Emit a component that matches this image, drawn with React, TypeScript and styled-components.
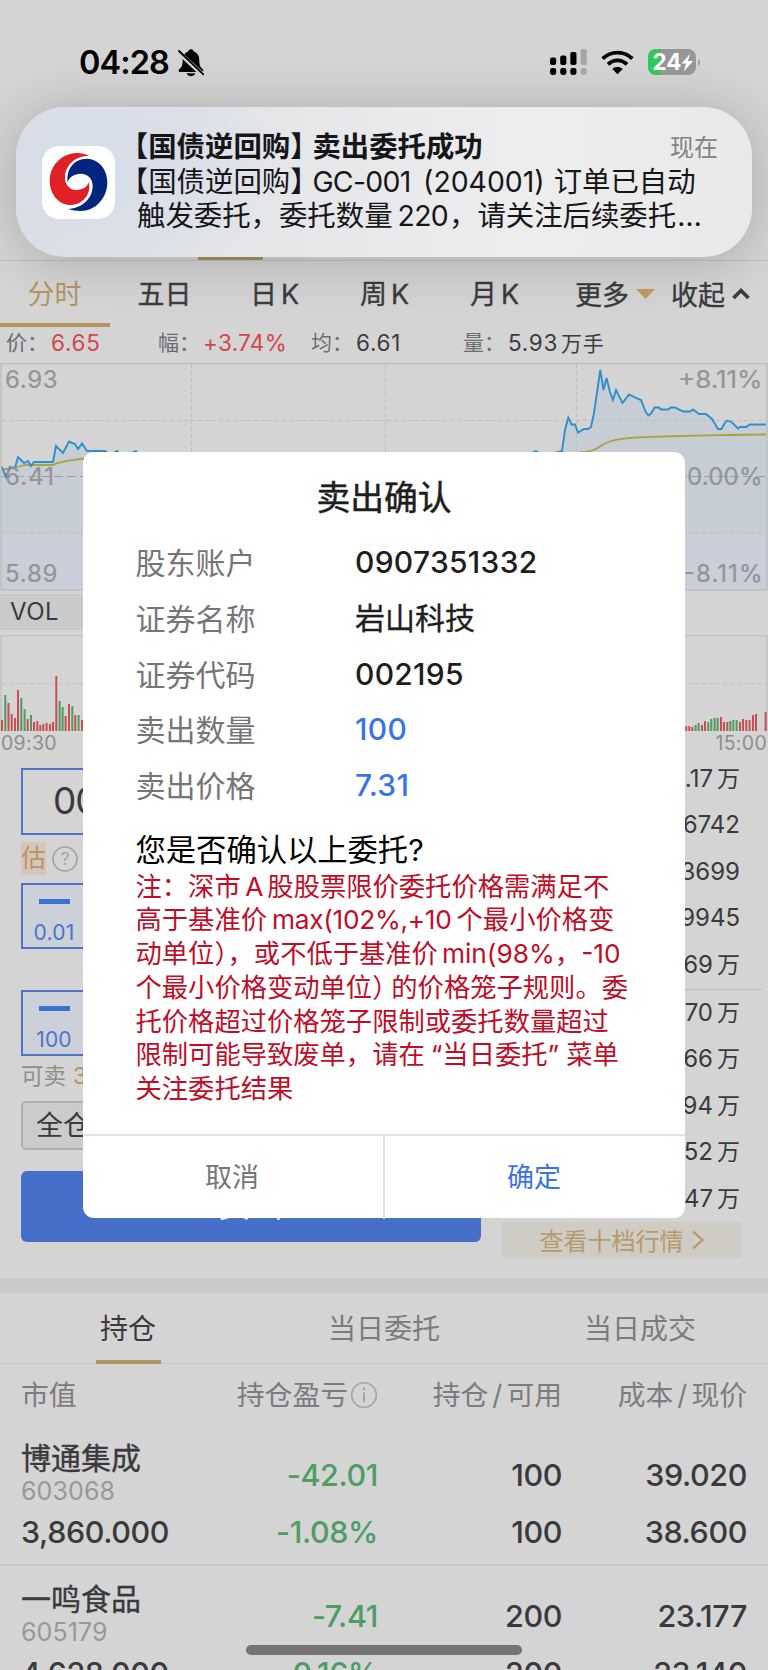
import React from 'react';
import styled, { createGlobalStyle } from 'styled-components';

const GlobalStyle = createGlobalStyle`
  *, *::before, *::after { box-sizing: border-box; }
  html, body { margin: 0; padding: 0; background: #d4d4d4; }
  body {
    font-family: Inter, "Noto Sans CJK SC", sans-serif;
    color: #3a3a3c;
    -webkit-font-smoothing: antialiased;
  }
`;

const Screen = styled.div`
  position: relative;
  width: 768px;
  height: 1670px;
  overflow: hidden;
  display: flex;
  flex-direction: column;
  background: #d4d4d4;
  white-space: nowrap;
`;

/* Latin run inside Chinese text, with a little air on the sides. */
const Latin = styled.span<{ $l?: number; $r?: number; $ls?: number }>`
  margin-left: ${(p) => p.$l ?? 0}px;
  margin-right: ${(p) => p.$r ?? 0}px;
  letter-spacing: ${(p) => p.$ls ?? 0}px;
`;

/* ---------- status bar ---------- */
const StatusBar = styled.header`
  position: relative;
  z-index: 3;
  flex: none;
  height: 107px;
  padding: 18px 67px 0 79px;
  display: flex;
  align-items: center;
  justify-content: space-between;
  color: #000;
`;
const Clock = styled.div`
  display: flex;
  align-items: center;
  gap: 9px;
  font-size: 32.5px;
  font-weight: 600;
  line-height: 40px;
  letter-spacing: -0.9px;
`;
const StatusIcons = styled.div`
  display: flex;
  align-items: center;
  gap: 14px;
`;

const BellOff = () => (
  <svg width="26" height="28" viewBox="0 0 78 84">
    <path
      d="M39 1c-5 0-8 3-9 7C17 12 14 23 14 36c0 14-4 19-10 25-4 4-3 8 3 8h64c6 0 7-4 3-8-6-6-10-11-10-25 0-13-3-24-16-28-1-4-4-7-9-7z"
    />
    <path d="M26 73h26c-2 5-7 9-13 9s-11-4-13-9z" />
    <path d="M0 8L76 79" stroke="#d0d0d0" strokeWidth="14" />
    <path d="M3 6L76 76" stroke="#000" strokeWidth="5.5" strokeLinecap="round" />
  </svg>
);

const Signal = () => (
  <svg width="37" height="27" viewBox="0 0 37 27">
    <g fill="#000">
      <rect x="0" y="8.5" width="6.2" height="7.5" rx="2" />
      <rect x="10.2" y="6.5" width="6.2" height="9.5" rx="2" />
      <rect x="20.3" y="3" width="6.2" height="13" rx="2" />
      <rect x="0" y="19" width="6.2" height="7" rx="2.4" />
      <rect x="10.2" y="19" width="6.2" height="7" rx="2.4" />
      <rect x="20.3" y="19" width="6.2" height="7" rx="2.4" />
    </g>
    <g fill="#a6a6a6">
      <rect x="30.6" y="0" width="6.2" height="16" rx="2" />
      <rect x="30.6" y="19" width="6.2" height="7" rx="2.4" />
    </g>
  </svg>
);

const Wifi = () => (
  <svg width="33" height="25" viewBox="0 0 99 75">
    <g fill="none" stroke="#000" strokeWidth="11.5">
      <path d="M5 26C30 2 69 2 94 26" />
      <path d="M21 43C38 27 61 27 78 43" />
    </g>
    <path d="M34 57c9-8 22-8 31 0L49.500 73z" />
  </svg>
);

const Battery = () => (
  <svg width="53" height="27" viewBox="0 0 53 27">
    <defs>
      <clipPath id="cell">
        <rect x="0" y="0" width="48" height="26" rx="8" />
      </clipPath>
    </defs>
    <g clipPath="url(#cell)">
      <rect width="48" height="26" fill="#969696" />
      <rect width="12.500" height="26" fill="#34c759" />
    </g>
    <path d="M50 9.500c2.700 1.400 2.700 6 0 7.500z" fill="#a0a0a0" />
    <text x="4.500" y="21.300" fontSize="22.500" fontWeight="700" fill="#fff" textLength="29" lengthAdjust="spacingAndGlyphs">24</text>
    <path d="M42 5L33.500 14.500h4.600L35.800 22.500l9.200-10.500h-5z" fill="#fff" />
  </svg>
);

/* ---------- notification ---------- */
const Banner = styled.section`
  position: absolute;
  z-index: 2;
  left: 16px;
  top: 107px;
  width: 736px;
  height: 150px;
  border-radius: 49px;
  padding: 23px 34px 23px 26px;
  display: flex;
  background:
    radial-gradient(ellipse 190px 120px at 90px 50px, #d7dee9 20%, rgba(215, 222, 233, 0) 100%),
    linear-gradient(90deg, #dadde3 0%, #e5e6e8 35%, #ededee 70%, #e9e9ea 100%);
  box-shadow: 0 4px 54px rgba(0, 0, 0, 0.2);
`;
const AppIcon = styled.div`
  flex: none;
  width: 73px;
  height: 73px;
  margin-top: 16px;
  border-radius: 17px;
  background: #fff;
  overflow: hidden;
`;
const BannerBody = styled.div`
  flex: 1;
  min-width: 0;
  margin-left: 22px;
  color: #161618;
  font-size: 28.400px;
`;
const BannerLine = styled.div<{ $bold?: boolean; $hang?: boolean }>`
  height: 34.500px;
  margin-left: ${(p) => (p.$hang ? -3 : 0)}px;
  line-height: 34.500px;
  font-weight: ${(p) => (p.$bold ? 700 : 400)};
  display: flex;
  justify-content: space-between;
`;
const Half = styled.span`
  font-feature-settings: 'halt';
`;
const Time = styled.span`
  font-size: 24px;
  font-weight: 400;
  color: #828285;
  line-height: 36px;
`;

const Logo = () => (
  <svg width="73" height="73" viewBox="66 348 219 219">
    <path
      fill="#e01f26"
      d="M207 377C190 369 170 367 150 372C113 382 89 415 89 452C89 492 117 525 152 525C184 525 207 500 208 471C208 465 207 461 205 457C204 470 187 481 168 480C148 479 135 463 135 443C135 412 157 379 207 377Z"
    />
    <path
      fill="#04257d"
      d="M143 457C138 420 160 386 200 386C237 387 262 418 262 456C262 505 226 543 182 543C168 543 155 541 144 537C192 535 218 500 218 468C218 446 204 431 182 431C162 431 147 442 143 457Z"
    />
  </svg>
);

/* ---------- market header ---------- */
const MarketNav = styled.div`
  flex: none;
  height: 154px;
  border-bottom: 1px solid #c0c0c0;
  display: flex;
  align-items: flex-end;
  padding-left: 198px;
`;
const NavMark = styled.div`
  width: 65px;
  height: 4px;
  background: #a98f5a;
`;
const PeriodTabs = styled.nav`
  flex: none;
  height: 66px;
  display: flex;
  font-size: 27px;
`;
const Period = styled.div<{ $on?: boolean }>`
  width: 110px;
  padding-right: 1px;
  text-align: center;
  line-height: 68px;
  height: 66px;
  color: ${(p) => (p.$on ? '#b3965f' : '#3c3c3e')};
  -webkit-text-stroke: ${(p) => (p.$on ? '0' : '0.35px #3c3c3e')};
  border-bottom: ${(p) => (p.$on ? '4px solid #b3965f' : '0')};
`;
const PeriodAction = styled.div<{ $ml: number }>`
  margin-left: ${(p) => p.$ml}px;
  display: flex;
  align-items: center;
  gap: 7px;
  height: 65px;
  -webkit-text-stroke: 0.35px #3c3c3e;
`;

const QuoteRow = styled.div`
  flex: none;
  height: 36px;
  padding-left: 6px;
  display: flex;
  line-height: 31px;
  font-size: 21px;
  color: #6e6e70;
`;
const Quote = styled.div<{ $w: number }>`
  width: ${(p) => p.$w}px;
  display: flex;
`;
const QuoteName = styled.span`
  width: 45px;
`;
const QuoteValue = styled.span<{ $red?: boolean; $ls?: number }>`
  color: ${(p) => (p.$red ? '#d3474b' : '#3c3c3e')};
  font-size: 22.500px;
  letter-spacing: ${(p) => p.$ls ?? 0.7}px;
`;
const Unit = styled.span`
  margin-left: 3px;
  font-size: 21px;
`;

const ChartArea = styled.svg`
  display: block;
  flex: none;
`;

const VolHead = styled.div`
  flex: none;
  width: 200px;
  height: 36px;
  margin: 3px 0 5px;
  padding-left: 10px;
  background: #cacaca;
  font-size: 24px;
  letter-spacing: 0.5px;
  line-height: 36px;
`;
const TimeAxis = styled.div`
  flex: none;
  display: flex;
  justify-content: space-between;
  height: 37px;
  padding: 0 1px;
  font-size: 19.500px;
  letter-spacing: 0.3px;
  line-height: 24px;
  color: #8e8e90;
`;

/* ---------- order form ---------- */
const TradePanel = styled.section`
  flex: none;
  height: 510px;
  display: flex;
  justify-content: space-between;
`;
const OrderForm = styled.div`
  width: 460px;
  margin-left: 21px;
  display: flex;
  flex-direction: column;
`;
const CodeBox = styled.div`
  height: 67px;
  border: 2px solid #4d73cd;
  padding-left: 30px;
  font-size: 37px;
  line-height: 62px;
  letter-spacing: -1px;
`;
const Estimate = styled.div`
  height: 48px;
  padding-top: 7px;
  display: flex;
  gap: 6px;
`;
const EstimateTag = styled.span`
  width: 25px;
  height: 33px;
  background: #d4c6ba;
  color: #bd9267;
  font-size: 25px;
  line-height: 32px;
`;
const Stepper = styled.div`
  height: 66px;
  border: 2px solid #4d73cd;
  background: #cbd0d9;
  display: flex;
  margin-bottom: 41px;
`;
const StepButton = styled.div`
  width: 62px;
  display: flex;
  flex-direction: column;
  align-items: center;
  color: #4d73cd;
  font-size: 21px;
  line-height: 26px;
  letter-spacing: 0.2px;
`;
const Minus = styled.i`
  width: 31px;
  height: 5px;
  margin: 14px 0 16px;
  background: #3a72cd;
`;
const Sellable = styled.div`
  height: 45px;
  margin-top: -41px;
  font-size: 22.500px;
  line-height: 39px;
  color: #8e8e90;
`;
const Gold = styled.span`
  margin-left: 7px;
  color: #b3965f;
`;
const PositionButton = styled.div`
  width: 106px;
  height: 49px;
  padding-left: 13px;
  border: 2px solid #b0b0b0;
  border-radius: 5px;
  background: #cbcbcb;
  font-size: 27px;
  line-height: 45px;
`;
const SellButton = styled.div`
  height: 71px;
  margin-top: 21px;
  border-radius: 6px;
  background: #466fc9;
  color: #e4e9f4;
  font-size: 32px;
  line-height: 69px;
  letter-spacing: 1px;
  text-align: center;
`;

const Book = styled.div`
  width: 266px;
  margin: -12px 6px 0 0;
  display: flex;
  flex-direction: column;
`;
const BookHalf = styled.div<{ $lower?: boolean }>`
  padding: ${(p) => (p.$lower ? '0' : '0 0 1px')};
  border-bottom: ${(p) => (p.$lower ? '0' : '1px solid #bcbcbc')};
`;
const BookRow = styled.div`
  height: 46.400px;
  line-height: 46.400px;
  padding-right: 22px;
  text-align: right;
  font-size: 24px;
`;
const Wan = styled.span`
  margin-left: 4px;
  font-size: 23px;
`;
const DepthLink = styled.div`
  width: 239px;
  height: 36px;
  margin: 0 0 0 6px;
  display: flex;
  align-items: center;
  justify-content: center;
  gap: 8px;
  background: #cfcbc5;
  color: #b59a6c;
  font-size: 24px;
`;

/* ---------- positions ---------- */
const Band = styled.div`
  flex: none;
  height: 15px;
  background: #cacaca;
`;
const BottomTabs = styled.nav`
  flex: none;
  height: 71px;
  display: grid;
  grid-template-columns: repeat(3, 256px);
  border-bottom: 1px solid #c8c8c8;
`;
const BottomTab = styled.div<{ $on?: boolean }>`
  padding-top: 5px;
  display: flex;
  flex-direction: column;
  align-items: center;
  font-size: 28px;
  line-height: 62px;
  color: ${(p) => (p.$on ? '#3a3a3c' : '#7c7c7e')};
  &::after {
    content: '';
    width: 65px;
    height: 4px;
    background: ${(p) => (p.$on ? '#b3965f' : 'transparent')};
  }
`;
const TableHead = styled.div`
  flex: none;
  height: 61px;
  display: grid;
  grid-template-columns: 180px 177px 184px 185px;
  padding-left: 21px;
  font-size: 27.800px;
  line-height: 60px;
  color: #7c7c7e;
`;
const HeadCell = styled.div<{ $right?: boolean; $gap?: number }>`
  display: flex;
  align-items: center;
  gap: ${(p) => p.$gap ?? 4}px;
  justify-content: ${(p) => (p.$right ? 'flex-end' : 'flex-start')};
`;
const Holding = styled.div`
  flex: none;
  height: 141px;
  padding: 14px 0 0 21px;
  display: grid;
  grid-template-columns: 180px 177px 184px 185px;
  grid-template-rows: 71px 44px;
  border-bottom: 2px solid #c8c8c8;
  font-size: 30.500px;
`;
const Name = styled.div`
  font-size: 30px;
  -webkit-text-stroke: 0.35px #3a3a3c;
  line-height: 38px;
`;
const Code = styled.div`
  font-size: 25px;
  line-height: 28px;
  letter-spacing: 0.1px;
  color: #98989a;
`;
const Amount = styled.div<{ $green?: boolean; $left?: boolean }>`
  line-height: 40px;
  align-self: center;
  font-weight: 500;
  letter-spacing: -0.4px;
  text-align: ${(p) => (p.$left ? 'left' : 'right')};
  color: ${(p) => (p.$green ? '#4f9d63' : '#3a3a3c')};
`;
const HomeBar = styled.div`
  position: absolute;
  z-index: 2;
  left: 246px;
  top: 1645px;
  width: 276px;
  height: 10px;
  border-radius: 5px;
  background: #747474;
`;

/* ---------- dialog ---------- */
const Dialog = styled.section`
  position: absolute;
  z-index: 1;
  left: 83px;
  top: 452px;
  width: 602px;
  height: 766px;
  border-radius: 11px;
  background: #fff;
  display: flex;
  flex-direction: column;
`;
const DialogTitle = styled.h1`
  margin: 0;
  padding-top: 24px;
  height: 82px;
  text-align: center;
  font-size: 33.800px;
  font-weight: 400;
  -webkit-text-stroke: 0.5px #1e1e20;
  line-height: 44px;
  color: #1e1e20;
`;
const Field = styled.div`
  height: 55.750px;
  padding-left: 52.500px;
  display: flex;
  font-size: 30px;
  line-height: 56px;
`;
const FieldName = styled.div`
  width: 219.500px;
  padding-top: 1px;
  color: #757577;
`;
const FieldValue = styled.div<{ $blue?: boolean; $cjk?: boolean }>`
  font-weight: ${(p) => (p.$cjk ? 400 : 500)};
  -webkit-text-stroke: ${(p) => (p.$cjk ? '0.35px #1e1e20' : '0')};
  letter-spacing: ${(p) => (p.$cjk ? 0 : 0.3)}px;
  color: ${(p) => (p.$blue ? '#3a73e8' : '#1e1e20')};
`;
const Question = styled.p`
  margin: 17px 0 0 52.500px;
  font-size: 30.300px;
  line-height: 40px;
  color: #000;
`;
const Notice = styled.div`
  margin: 0 0 0 52.500px;
  font-size: 26.300px;
  line-height: 33.700px;
  color: #c00e28;
`;
const DialogActions = styled.div`
  margin-top: auto;
  height: 84px;
  display: grid;
  grid-template-columns: 300px 302px;
  border-top: 2px solid #e3e3e3;
`;
const Action = styled.button<{ $primary?: boolean }>`
  border: 0;
  border-left: ${(p) => (p.$primary ? '2px solid #e3e3e3' : '0')};
  background: none;
  padding: 1px 2px 0 0;
  font: inherit;
  font-size: 27px;
  line-height: 82px;
  color: ${(p) => (p.$primary ? '#3a73e8' : '#757577')};
`;

/* ---------- data ---------- */
const priceLine =
  '2,467 6,477 10,467 15,468 18,457 24,463 28,461 31,466 34,462 53,462 56,446 63,453 69,441.500 75,444 78,449 82,443.500 87,451 105,451 110,455 117,451 122,456 136,451 142,458 300,468 520,458 536,451 544,456 562,451 565,430 568.300,417.500 571.500,424.500 575,424.500 578,432.500 584,429 588,429 591,427 594,413 600.300,370 603.500,390 606.500,378 610,392 613,400 616,390 622.500,403 629,394.500 636,398 641,400 646,412.500 648.500,415.500 651,413.500 654.500,407.500 659,407.500 661,409.500 668,409.500 671,407.500 675,407.500 683,411.500 690,411.500 693,409.500 699,414 706,414 712,419 718,429 721.500,429 725,422.500 727.500,420.500 732,422.500 738,428.500 740,427 746,427 750,424.500 766,424.500';
const averageLine =
  'M2 470C10 468 16 468 25 465H53C60 461 68 461 83 458.500C90 500 500 500 580 452.500C600 451 598 445 610 441.500C624 437 645 437 680 436C715 435.500 740 434.500 766 434.500';

type Bar = [number, number, ('g' | 'r')?];
const volume: Bar[] = [
  [2, 11], [5.300, 36, 'g'], [8.500, 28], [11.700, 17], [15, 13], [18, 41], [21.300, 33, 'g'], [24.600, 22, 'g'],
  [27.700, 12], [31, 16, 'g'], [34, 9], [37.300, 10], [40.300, 6], [43.300, 7], [46.600, 8], [50, 7], [53, 9],
  [56.300, 55], [59.600, 30, 'g'], [62.600, 24, 'g'], [65.600, 15], [69, 27], [72.300, 25, 'g'], [75.300, 16],
  [78.600, 16, 'g'], [82, 11],
  [686.300, 5], [689.300, 5], [692.300, 4], [695.600, 6, 'g'], [698.600, 8, 'g'], [702, 6], [705, 10],
  [708.300, 9, 'g'], [711.300, 12, 'g'], [714.600, 13, 'g'], [717.600, 13, 'g'], [721, 14], [724, 9], [727.300, 9],
  [730.300, 10, 'g'], [733.300, 11, 'g'], [736.600, 11, 'g'], [740, 9], [743, 12], [746.300, 11], [749.600, 11],
  [753, 16], [756, 17], [765.600, 19],
];

const noticeLines: React.ReactNode[] = [
  <>注：深市<Latin $l={4.5} $r={4}>A</Latin>股股票限价委托价格需满足不</>,
  <>高于基准价<Latin $l={5} $r={5} $ls={-0.3}>max(102%,+10</Latin>个最小价格变</>,
  <>动单位<Half>）</Half>，或不低于基准价<Latin $l={4}>min(98%</Latin>，<Latin>-10</Latin></>,
  <>个最小价格变动单位<Half>）</Half><Latin $l={6}>的价格笼子规则。委</Latin></>,
  <>托价格超过价格笼子限制或委托数量超过</>,
  <>限制可能导致废单，请在<Latin $l={6}>“</Latin>当日委托<Latin $r={7}>”</Latin>菜单</>,
  <>关注委托结果</>,
];

const upper = ['1.17', '16742', '13699', '19945', '2.69'];
const lower = ['3.70', '2.66', '1.94', '4.52', '3.47'];

const holdings = [
  { name: '博通集成', code: '603068', profit: '-42.01', qty: '100', cost: '39.020', value: '3,860.000', pct: '-1.08%', avail: '100', price: '38.600' },
  { name: '一鸣食品', code: '605179', profit: '-7.41', qty: '200', cost: '23.177', value: '4,628.000', pct: '-0.16%', avail: '200', price: '23.140' },
];

const MarketChart = () => (
  <ChartArea width="768" height="228" viewBox="0 363 768 228">
    <polygon points={`${priceLine} 766,590 2,590`} fill="#b5c4d4" fillOpacity="0.4" />
    <rect x="1" y="533" width="766" height="57" fill="#d0d2e0" fillOpacity="0.35" />
    <rect x="1" y="363.500" width="766" height="226.500" fill="none" stroke="#bcbebc" strokeWidth="1.500" />
    <g stroke="#b9bfb9" strokeWidth="1" strokeDasharray="4 3" fill="none">
      <path d="M191.500 364V590M385.500 364V590M576.500 364V590M2 420.500H766M2 533H766" />
    </g>
    <path d="M2 476.500H766" stroke="#9b9fa3" strokeWidth="1" strokeDasharray="9 4" />
    <path d={averageLine} fill="none" stroke="#ada13c" strokeWidth="1.800" />
    <polyline points={priceLine} fill="none" stroke="#2f8fcb" strokeWidth="1.900" />
    <g fontSize="24" fill="#929496" stroke="#929496" strokeWidth="0.2">
      <text x="5" y="387.500" textLength="52.500">6.93</text>
      <text x="5" y="484.500" textLength="49">6.41</text>
      <text x="5" y="581.500" textLength="52.500">5.89</text>
      <text x="678" y="387.500" textLength="84.500" lengthAdjust="spacingAndGlyphs">+8.11%</text>
      <text x="687" y="484.500" textLength="75.500">0.00%</text>
      <text x="684" y="581.500" textLength="78.500">-8.11%</text>
    </g>
  </ChartArea>
);

const VolumeChart = () => (
  <ChartArea width="768" height="96" viewBox="0 635 768 96">
    <path d="M1 731V635.500H767V731" fill="none" stroke="#c0c2c0" strokeWidth="1.500" />
    <path d="M2 683.500H766" stroke="#bec0be" strokeDasharray="4 3" />
    {volume.map(([x, h, c]) => (
      <rect key={x} x={x - 1} y={731 - h} width="2" height={h} fill={c === 'g' ? '#4f9a60' : '#c94f54'} />
    ))}
  </ChartArea>
);

export default function App() {
  return (
    <Screen>
      <GlobalStyle />
      <StatusBar>
        <Clock>
          04:28
          <BellOff />
        </Clock>
        <StatusIcons>
          <Signal />
          <Wifi />
          <Battery />
        </StatusIcons>
      </StatusBar>

      <Banner>
        <AppIcon>
          <Logo />
        </AppIcon>
        <BannerBody>
          <BannerLine $bold $hang>
            <span><Half>【</Half>国债逆回购<Half>】</Half><Latin $l={8}>卖出委托成功</Latin></span>
            <Time>现在</Time>
          </BannerLine>
          <BannerLine $hang>
            <span>
              <Half>【</Half>国债逆回购<Half>】</Half>
              <Latin $l={8} $ls={-0.7}>GC-001</Latin><Latin $l={12.5} $r={9}>(204001)</Latin>订单已自动
            </span>
          </BannerLine>
          <BannerLine>
            <span>触发委托，委托数量<Latin $l={5} $r={1} $ls={-0.7}>220</Latin>，请关注后续委托<Latin $l={1} $ls={1}>…</Latin></span>
          </BannerLine>
        </BannerBody>
      </Banner>

      <MarketNav>
        <NavMark />
      </MarketNav>
      <PeriodTabs>
        <Period $on>分时</Period>
        <Period>五日</Period>
        <Period>日<Latin $l={4}>K</Latin></Period>
        <Period>周<Latin $l={4}>K</Latin></Period>
        <Period>月<Latin $l={4}>K</Latin></Period>
        <PeriodAction $ml={25}>
          更多
          <svg width="19" height="10" viewBox="0 0 19 10"><path d="M0 0H19L9.500 10z" fill="#c39a62" /></svg>
        </PeriodAction>
        <PeriodAction $ml={16}>
          收起
          <svg width="18" height="13" viewBox="0 0 18 13"><path d="M1.500 11L9 3.500L16.500 11" fill="none" stroke="#3c3c3e" strokeWidth="3.600" /></svg>
        </PeriodAction>
      </PeriodTabs>
      <QuoteRow>
        <Quote $w={152}><QuoteName>价：</QuoteName><QuoteValue $red>6.65</QuoteValue></Quote>
        <Quote $w={153}><QuoteName>幅：</QuoteName><QuoteValue $red $ls={0.3}>+3.74%</QuoteValue></Quote>
        <Quote $w={152}><QuoteName>均：</QuoteName><QuoteValue>6.61</QuoteValue></Quote>
        <Quote $w={200}><QuoteName>量：</QuoteName><QuoteValue>5.93<Unit>万手</Unit></QuoteValue></Quote>
      </QuoteRow>
      <MarketChart />
      <VolHead>VOL</VolHead>
      <VolumeChart />
      <TimeAxis>
        <span>09:30</span>
        <span>15:00</span>
      </TimeAxis>

      <TradePanel>
        <OrderForm>
          <CodeBox>002195</CodeBox>
          <Estimate>
            <EstimateTag>估</EstimateTag>
            <svg width="26" height="34" viewBox="0 0 26 34">
              <circle cx="13" cy="17" r="12" fill="none" stroke="#a2a2a2" strokeWidth="1.600" />
              <text x="13" y="23" fontSize="17" fill="#a2a2a2" textAnchor="middle">?</text>
            </svg>
          </Estimate>
          <Stepper><StepButton><Minus />0.01</StepButton></Stepper>
          <Stepper><StepButton><Minus />100</StepButton></Stepper>
          <Sellable>可卖<Gold>300</Gold></Sellable>
          <PositionButton>全仓</PositionButton>
          <SellButton>卖出</SellButton>
        </OrderForm>
        <Book>
          <BookHalf>
            {upper.map((v) => (
              <BookRow key={v}>{v}{v.includes('.') && <Wan>万</Wan>}</BookRow>
            ))}
          </BookHalf>
          <BookHalf $lower>
            {lower.map((v) => (
              <BookRow key={v}>{v}<Wan>万</Wan></BookRow>
            ))}
          </BookHalf>
          <DepthLink>
            查看十档行情
            <svg width="12" height="20" viewBox="0 0 12 20"><path d="M1 1.500L10.500 10L1 18.500" fill="none" stroke="#b59a6c" strokeWidth="2.200" /></svg>
          </DepthLink>
        </Book>
      </TradePanel>

      <Band />
      <BottomTabs>
        <BottomTab $on>持仓</BottomTab>
        <BottomTab>当日委托</BottomTab>
        <BottomTab>当日成交</BottomTab>
      </BottomTabs>
      <TableHead>
        <HeadCell>市值</HeadCell>
        <HeadCell $right $gap={2}>
          持仓盈亏
          <svg width="28" height="28" viewBox="0 0 28 28">
            <circle cx="14" cy="14" r="12.300" fill="none" stroke="#a4a4a4" strokeWidth="1.600" />
            <path d="M14 11.500V21M14 6.500V9" stroke="#a4a4a4" strokeWidth="2" />
          </svg>
        </HeadCell>
        <HeadCell $right>持仓<span>/</span>可用</HeadCell>
        <HeadCell $right>成本<span>/</span>现价</HeadCell>
      </TableHead>
      {holdings.map((h) => (
        <Holding key={h.code}>
          <div>
            <Name>{h.name}</Name>
            <Code>{h.code}</Code>
          </div>
          <Amount $green>{h.profit}</Amount>
          <Amount>{h.qty}</Amount>
          <Amount>{h.cost}</Amount>
          <Amount $left>{h.value}</Amount>
          <Amount $green>{h.pct}</Amount>
          <Amount>{h.avail}</Amount>
          <Amount>{h.price}</Amount>
        </Holding>
      ))}
      <HomeBar />

      <Dialog>
        <DialogTitle>卖出确认</DialogTitle>
        <Field><FieldName>股东账户</FieldName><FieldValue>0907351332</FieldValue></Field>
        <Field><FieldName>证券名称</FieldName><FieldValue $cjk>岩山科技</FieldValue></Field>
        <Field><FieldName>证券代码</FieldName><FieldValue>002195</FieldValue></Field>
        <Field><FieldName>卖出数量</FieldName><FieldValue $blue>100</FieldValue></Field>
        <Field><FieldName>卖出价格</FieldName><FieldValue $blue>7.31</FieldValue></Field>
        <Question>您是否确认以上委托?</Question>
        <Notice>
          {noticeLines.map((line, i) => (
            <div key={i}>{line}</div>
          ))}
        </Notice>
        <DialogActions>
          <Action>取消</Action>
          <Action $primary>确定</Action>
        </DialogActions>
      </Dialog>
    </Screen>
  );
}
